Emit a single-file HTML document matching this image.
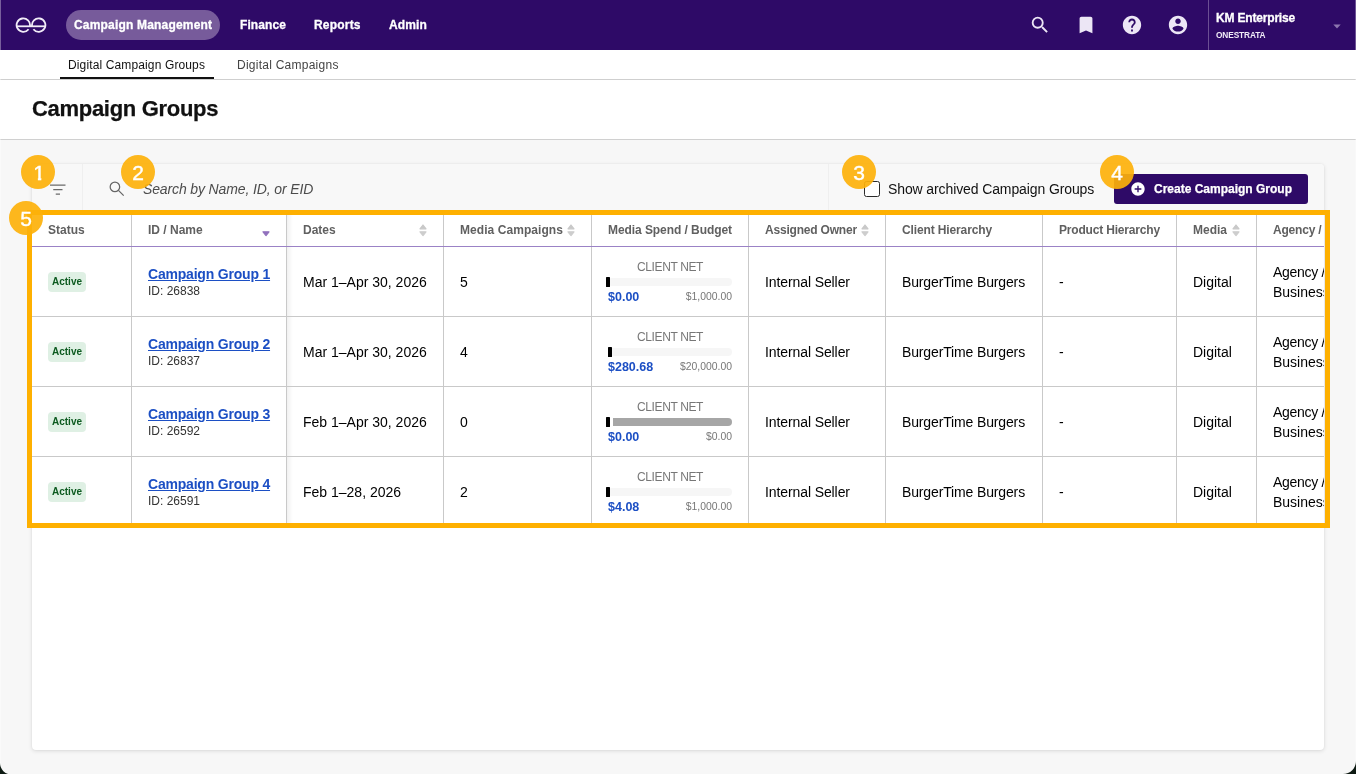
<!DOCTYPE html>
<html lang="en">
<head>
<meta charset="utf-8">
<title>Campaign Groups</title>
<style>
*{box-sizing:border-box;margin:0;padding:0}
html,body{width:1356px;height:774px;overflow:hidden;background:#f7f7f7;font-family:"Liberation Sans",sans-serif;color:#000}
.abs{position:absolute}
#root{will-change:transform;position:relative;width:1356px;height:774px;overflow:hidden;background:#f7f7f7}
/* top bar */
#top{left:0;top:0;width:1356px;height:50px;background:#2e0a67}
#edge{left:0;top:0;width:1px;height:774px;background:rgba(255,255,255,.35);z-index:50}
.nav{color:#fff;font-weight:bold;font-size:12px;line-height:14px;top:18px;white-space:nowrap;-webkit-text-stroke:.3px #fff}
#pill{left:66px;top:10px;width:154px;height:30px;border-radius:15px;background:#775b9b}
#vdiv{left:1208px;top:0;width:1px;height:50px;background:#6b4f93}
/* sub nav */
#sub{left:0;top:50px;width:1356px;height:30px;background:#fff;border-bottom:1px solid #cfcfcf}
.tab{font-size:12px;line-height:14px;top:58px;white-space:nowrap}
#tabline{left:60px;top:77px;width:153.600px;height:2px;background:#111}
/* header */
#hdr{left:0;top:80px;width:1356px;height:60px;background:#fff;border-bottom:1px solid #d0d0d0}
#title{left:32px;top:96px;font-size:22px;line-height:26px;font-weight:bold;letter-spacing:-.3px;color:#111;white-space:nowrap;-webkit-text-stroke:.25px #111}
/* card */
#card{left:32px;top:164px;width:1292px;height:586px;background:#fff;border-radius:4px;box-shadow:0 1px 4px rgba(0,0,0,.12),0 0 2px rgba(0,0,0,.06);overflow:hidden}
#tools{left:0;top:0;width:1292px;height:51px;background:#f8f8f8}
.tdiv{top:0;width:1px;height:51px;background:#efefef}
#ph{left:111px;top:17px;font-size:14px;line-height:16px;font-style:italic;color:#4c4c4c;white-space:nowrap;letter-spacing:-.13px}
#cb{left:832px;top:17px;width:16px;height:16px;border:1.400px solid #2a2a2a;border-radius:2.500px;background:#fff}
#cbl{left:856px;top:17px;font-size:14px;line-height:16px;color:#111;white-space:nowrap;letter-spacing:-.11px}
#btn{left:1082px;top:10px;width:194px;height:30px;border-radius:3px;background:#2e0a67}
#btnt{left:1122px;top:18px;font-size:12px;line-height:14px;font-weight:bold;color:#fff;white-space:nowrap;-webkit-text-stroke:.25px #fff}
/* table */
#tbl{left:0;top:51px;width:1292px;height:311px;overflow:hidden;background:#fff}
.vl{top:0;width:1px;height:320px;background:#c9c9c9}
.hl{left:0;width:1292px;height:1px;background:#c9c9c9}
#pl{left:0;top:31px;width:1292px;height:1px;background:#9b82c6}
.th{top:8px;font-size:12px;line-height:14px;font-weight:bold;color:#606060;white-space:nowrap}
.td{font-size:14px;line-height:16px;color:#000;white-space:nowrap}
.act{left:16px;width:38px;height:20px;border-radius:4px;background:#dff0e4;color:#0c5a1f;font-size:10px;font-weight:bold;line-height:20px;text-align:center}
.lnk{left:116px;font-size:14px;line-height:16px;font-weight:bold;color:#1c4fc4;text-decoration:underline;letter-spacing:-.2px;white-space:nowrap}
.idt{left:116px;font-size:12px;line-height:14px;color:#333;white-space:nowrap}
.cn{left:576px;width:124px;text-align:center;font-size:12px;line-height:13px;color:#777;letter-spacing:-.38px;white-space:nowrap}
.bar{left:576px;width:124px;height:7.500px;border-radius:4px;background:#f6f6f6}
.bar.full{background:#a6a6a6;left:581px;width:119px;border-radius:0 4px 4px 0}
.tick{left:574px;width:4.300px;height:9.600px;background:#000;border-radius:.600px;margin-top:-.500px}
.sp{left:576px;font-size:12.500px;line-height:14px;font-weight:bold;color:#1c4fc4;white-space:nowrap}
.bd{left:576px;width:124px;text-align:right;font-size:10.4px;line-height:12px;color:#777;white-space:nowrap}
/* annotations */
.badge{width:34px;height:34px;border-radius:17px;background:rgba(253,177,10,.92);color:#fff;font-size:21px;line-height:35.400px;text-align:center;z-index:20;-webkit-text-stroke:.4px #fff}
.one{display:inline-block;line-height:1;position:relative;left:1.200px;clip-path:polygon(0 0,100% 0,100% 75.500%,68% 75.500%,68% 100%,39% 100%,39% 75.500%,0 75.500%)}
#hl{left:27px;top:210px;width:1303px;height:318px;border:5px solid #feb000;z-index:15}
.corner{bottom:0;z-index:60}
</style>
</head>
<body>
<div id="root">
<div id="top" class="abs"></div>
<div id="pill" class="abs"></div>
<svg class="abs" style="left:15px;top:17.200px" width="32" height="18" viewBox="0 0 32 18" fill="none" stroke="#f1ecf8" stroke-width="1.8">
<path d="M1.6 9.3H30.4"/>
<path d="M13.6 12.2A6.7 6.7 0 1 1 14.9 9.3"/>
<path d="M18.4 12.2A6.7 6.7 0 1 0 17.1 9.3"/>
</svg>
<div class="abs nav" style="left:74px;letter-spacing:.19px">Campaign Management</div>
<div class="abs nav" style="left:240px;letter-spacing:.1px">Finance</div>
<div class="abs nav" style="left:314px;letter-spacing:.2px">Reports</div>
<div class="abs nav" style="left:389px;letter-spacing:.15px">Admin</div>
<!-- right icons -->
<svg class="abs" style="left:1029px;top:14px" width="22" height="22" viewBox="0 0 24 24" fill="#ece6f5"><path d="M15.5 14h-.79l-.28-.27A6.47 6.47 0 0 0 16 9.5 6.5 6.5 0 1 0 9.5 16c1.61 0 3.09-.59 4.23-1.57l.27.28v.79l5 4.99L20.490 19l-4.990-5zm-6 0C7.010 14 5 11.990 5 9.500S7.010 5 9.500 5 14 7.010 14 9.500 11.990 14 9.500 14z"/></svg>
<svg class="abs" style="left:1075px;top:14px" width="22" height="22" viewBox="0 0 24 24" fill="#ece6f5"><path d="M17 3H7c-1.100 0-2 .900-2 2v16l7-3 7 3V5c0-1.100-.900-2-2-2z"/></svg>
<svg class="abs" style="left:1121px;top:14px" width="22" height="22" viewBox="0 0 24 24" fill="#ece6f5"><path d="M12 2C6.480 2 2 6.480 2 12s4.480 10 10 10 10-4.480 10-10S17.520 2 12 2zm1 17h-2v-2h2v2zm2.070-7.750l-.900.920C13.450 12.900 13 13.500 13 15h-2v-.500c0-1.100.450-2.100 1.170-2.830l1.240-1.260c.370-.360.590-.860.590-1.410 0-1.100-.900-2-2-2s-2 .900-2 2H8c0-2.210 1.790-4 4-4s4 1.790 4 4c0 .880-.360 1.680-.930 2.250z"/></svg>
<svg class="abs" style="left:1167px;top:14px" width="22" height="22" viewBox="0 0 24 24" fill="#ece6f5"><path d="M12 2C6.480 2 2 6.480 2 12s4.480 10 10 10 10-4.480 10-10S17.520 2 12 2zm0 3c1.660 0 3 1.340 3 3s-1.340 3-3 3-3-1.340-3-3 1.340-3 3-3zm0 14.200c-2.500 0-4.710-1.280-6-3.220.030-1.990 4-3.080 6-3.080 1.990 0 5.970 1.090 6 3.080-1.290 1.940-3.500 3.220-6 3.220z"/></svg>
<div id="vdiv" class="abs"></div>
<div class="abs nav" style="left:1216px;top:11px;letter-spacing:-.18px">KM Enterprise</div>
<div class="abs" style="left:1216px;top:29.500px;font-size:8.300px;line-height:10px;letter-spacing:-.1px;font-weight:bold;color:#f0ebf7;white-space:nowrap">ONESTRATA</div>
<svg class="abs" style="left:1333px;top:24px" width="8" height="5" viewBox="0 0 8 5"><path d="M0.300 0.500H7.700L4 4.500z" fill="#8d76b0"/></svg>

<div id="sub" class="abs"></div>
<div class="abs tab" style="left:68px;color:#111;letter-spacing:.13px">Digital Campaign Groups</div>
<div class="abs tab" style="left:237px;color:#444;letter-spacing:.25px">Digital Campaigns</div>
<div id="tabline" class="abs"></div>
<div id="hdr" class="abs"></div>
<div id="title" class="abs">Campaign Groups</div>

<div id="card" class="abs">
 <div id="tools" class="abs"></div>
 <div class="abs tdiv" style="left:50px"></div>
 <div class="abs tdiv" style="left:796px"></div>
 <svg class="abs" style="left:16px;top:15px" width="20" height="20" viewBox="0 0 20 20" fill="none" stroke="#6a6a6a" stroke-width="1.1"><path d="M2 6.100H17.500M5.250 10.600H14.500M7.750 15.100H12"/></svg>
 <svg class="abs" style="left:75px;top:15px" width="20" height="20" viewBox="0 0 24 24" fill="none" stroke="#666" stroke-width="1.500"><circle cx="9.500" cy="9.500" r="5.700"/><path d="M13.700 13.700L20 20"/></svg>
 <div id="ph" class="abs">Search by Name, ID, or EID</div>
 <div id="cb" class="abs"></div>
 <div id="cbl" class="abs">Show archived Campaign Groups</div>
 <div id="btn" class="abs"></div>
 <svg class="abs" style="left:1097.500px;top:16.500px" width="16" height="16" viewBox="0 0 24 24" fill="#fff"><path d="M12 2C6.480 2 2 6.480 2 12s4.480 10 10 10 10-4.480 10-10S17.520 2 12 2zm5 11h-4v4h-2v-4H7v-2h4V7h2v4h4v2z"/></svg>
 <div id="btnt" class="abs">Create Campaign Group</div>

 <div id="tbl" class="abs">
  <div class="abs vl" style="left:99px"></div>
  <div class="abs vl" style="left:254px"></div>
  <div class="abs vl" style="left:411px"></div>
  <div class="abs vl" style="left:559px"></div>
  <div class="abs vl" style="left:716px"></div>
  <div class="abs vl" style="left:853px"></div>
  <div class="abs vl" style="left:1010px"></div>
  <div class="abs vl" style="left:1144px"></div>
  <div class="abs vl" style="left:1224px"></div>
  <div class="abs" style="left:255px;top:0;width:6px;height:311px;background:linear-gradient(90deg,rgba(0,0,0,.055),rgba(0,0,0,0))"></div>
  <div id="pl" class="abs"></div>
  <div class="abs hl" style="top:101px"></div>
  <div class="abs hl" style="top:171px"></div>
  <div class="abs hl" style="top:241px"></div>
  <div class="abs hl" style="top:311px"></div>
  <!-- header -->
  <div class="abs th" style="left:16px">Status</div>
  <div class="abs th" style="left:116px">ID / Name</div>
  <div class="abs th" style="left:271px">Dates</div>
  <div class="abs th" style="left:428px;letter-spacing:.06px">Media Campaigns</div>
  <div class="abs th" style="left:576px;letter-spacing:-.07px">Media Spend / Budget</div>
  <div class="abs th" style="left:733px;letter-spacing:-.2px">Assigned Owner</div>
  <div class="abs th" style="left:870px;letter-spacing:-.13px">Client Hierarchy</div>
  <div class="abs th" style="left:1027px;letter-spacing:-.18px">Product Hierarchy</div>
  <div class="abs th" style="left:1161px">Media</div>
  <div class="abs th" style="left:1241px;letter-spacing:-.2px">Agency /</div>
  <!-- sort icons -->
  <svg class="abs" style="left:230px;top:9px" width="8" height="13" viewBox="0 0 8 13"><path d="M1 7.800H7L4 11.600z" fill="#9171bd" stroke="#9171bd" stroke-width="1.2" stroke-linejoin="round"/></svg>
  <svg class="abs sort" style="left:387px;top:9px" width="8" height="13" viewBox="0 0 8 13"><path d="M1 4.800H7L4 1z" fill="#c8c8c8" stroke="#c8c8c8" stroke-width="1.2" stroke-linejoin="round"/><path d="M1 7.800H7L4 11.600z" fill="#cdcdcd" stroke="#cdcdcd" stroke-width="1.2" stroke-linejoin="round"/></svg>
  <svg class="abs sort" style="left:535px;top:9px" width="8" height="13" viewBox="0 0 8 13"><path d="M1 4.800H7L4 1z" fill="#c8c8c8" stroke="#c8c8c8" stroke-width="1.2" stroke-linejoin="round"/><path d="M1 7.800H7L4 11.600z" fill="#cdcdcd" stroke="#cdcdcd" stroke-width="1.2" stroke-linejoin="round"/></svg>
  <svg class="abs sort" style="left:829px;top:9px" width="8" height="13" viewBox="0 0 8 13"><path d="M1 4.800H7L4 1z" fill="#c8c8c8" stroke="#c8c8c8" stroke-width="1.2" stroke-linejoin="round"/><path d="M1 7.800H7L4 11.600z" fill="#cdcdcd" stroke="#cdcdcd" stroke-width="1.2" stroke-linejoin="round"/></svg>
  <svg class="abs sort" style="left:1200px;top:9px" width="8" height="13" viewBox="0 0 8 13"><path d="M1 4.800H7L4 1z" fill="#c8c8c8" stroke="#c8c8c8" stroke-width="1.2" stroke-linejoin="round"/><path d="M1 7.800H7L4 11.600z" fill="#cdcdcd" stroke="#cdcdcd" stroke-width="1.2" stroke-linejoin="round"/></svg>
  <!-- ROWS -->
  <!--R1--><div class="abs" style="left:0;top:32px">
   <div class="abs act" style="top:25px">Active</div>
   <div class="abs lnk" style="top:19px">Campaign Group 1</div><div class="abs idt" style="top:37px">ID: 26838</div>
   <div class="abs td" style="left:271px;top:27px">Mar 1–Apr 30, 2026</div>
   <div class="abs td" style="left:428px;top:27px">5</div>
   <div class="abs cn" style="top:14px">CLIENT NET</div><div class="abs bar" style="top:31px"></div><div class="abs tick" style="top:30.600px"></div>
   <div class="abs sp" style="top:43px">$0.00</div><div class="abs bd" style="top:44px">$1,000.00</div>
   <div class="abs td" style="left:733px;top:27px;letter-spacing:-.1px">Internal Seller</div>
   <div class="abs td" style="left:870px;top:27px;letter-spacing:-.14px">BurgerTime Burgers</div>
   <div class="abs td" style="left:1027px;top:27px">-</div>
   <div class="abs td" style="left:1161px;top:27px">Digital</div>
   <div class="abs td" style="left:1241px;top:17px;letter-spacing:-.3px">Agency /</div><div class="abs td" style="left:1241px;top:37px">Business</div>
  </div>
  <!--R2--><div class="abs" style="left:0;top:102px">
   <div class="abs act" style="top:25px">Active</div>
   <div class="abs lnk" style="top:19px">Campaign Group 2</div><div class="abs idt" style="top:37px">ID: 26837</div>
   <div class="abs td" style="left:271px;top:27px">Mar 1–Apr 30, 2026</div>
   <div class="abs td" style="left:428px;top:27px">4</div>
   <div class="abs cn" style="top:14px">CLIENT NET</div><div class="abs bar" style="top:31px"></div><div class="abs tick" style="top:30.600px;left:576px"></div>
   <div class="abs sp" style="top:43px">$280.68</div><div class="abs bd" style="top:44px">$20,000.00</div>
   <div class="abs td" style="left:733px;top:27px;letter-spacing:-.1px">Internal Seller</div>
   <div class="abs td" style="left:870px;top:27px;letter-spacing:-.14px">BurgerTime Burgers</div>
   <div class="abs td" style="left:1027px;top:27px">-</div>
   <div class="abs td" style="left:1161px;top:27px">Digital</div>
   <div class="abs td" style="left:1241px;top:17px;letter-spacing:-.3px">Agency /</div><div class="abs td" style="left:1241px;top:37px">Business</div>
  </div>
  <!--R3--><div class="abs" style="left:0;top:172px">
   <div class="abs act" style="top:25px">Active</div>
   <div class="abs lnk" style="top:19px">Campaign Group 3</div><div class="abs idt" style="top:37px">ID: 26592</div>
   <div class="abs td" style="left:271px;top:27px">Feb 1–Apr 30, 2026</div>
   <div class="abs td" style="left:428px;top:27px">0</div>
   <div class="abs cn" style="top:14px">CLIENT NET</div><div class="abs bar full" style="top:31px"></div><div class="abs tick" style="top:30.600px"></div>
   <div class="abs sp" style="top:43px">$0.00</div><div class="abs bd" style="top:44px">$0.00</div>
   <div class="abs td" style="left:733px;top:27px;letter-spacing:-.1px">Internal Seller</div>
   <div class="abs td" style="left:870px;top:27px;letter-spacing:-.14px">BurgerTime Burgers</div>
   <div class="abs td" style="left:1027px;top:27px">-</div>
   <div class="abs td" style="left:1161px;top:27px">Digital</div>
   <div class="abs td" style="left:1241px;top:17px;letter-spacing:-.3px">Agency /</div><div class="abs td" style="left:1241px;top:37px">Business</div>
  </div>
  <!--R4--><div class="abs" style="left:0;top:242px">
   <div class="abs act" style="top:25px">Active</div>
   <div class="abs lnk" style="top:19px">Campaign Group 4</div><div class="abs idt" style="top:37px">ID: 26591</div>
   <div class="abs td" style="left:271px;top:27px">Feb 1–28, 2026</div>
   <div class="abs td" style="left:428px;top:27px">2</div>
   <div class="abs cn" style="top:14px">CLIENT NET</div><div class="abs bar" style="top:31px"></div><div class="abs tick" style="top:30.600px"></div>
   <div class="abs sp" style="top:43px">$4.08</div><div class="abs bd" style="top:44px">$1,000.00</div>
   <div class="abs td" style="left:733px;top:27px;letter-spacing:-.1px">Internal Seller</div>
   <div class="abs td" style="left:870px;top:27px;letter-spacing:-.14px">BurgerTime Burgers</div>
   <div class="abs td" style="left:1027px;top:27px">-</div>
   <div class="abs td" style="left:1161px;top:27px">Digital</div>
   <div class="abs td" style="left:1241px;top:17px;letter-spacing:-.3px">Agency /</div><div class="abs td" style="left:1241px;top:37px">Business</div>
  </div>
 </div>
</div>

<!-- annotation overlays -->
<div id="hl" class="abs"></div>
<div class="abs badge" style="left:21px;top:155px"><span class="one">1</span></div>
<div class="abs badge" style="left:121px;top:155px">2</div>
<div class="abs badge" style="left:842px;top:155px">3</div>
<div class="abs badge" style="left:1100px;top:155px">4</div>
<div class="abs badge" style="left:9px;top:201px">5</div>
<div id="edge" class="abs"></div>
<div class="abs" style="right:0;top:0;width:1px;height:774px;background:rgba(255,255,255,.3);z-index:50"></div>
<svg class="abs corner" style="left:0;bottom:0" width="11.500" height="11.500" viewBox="0 0 12 12"><path d="M0 0V12H12A12 12 0 0 1 0 0z" fill="#0d1a12"/></svg>
<svg class="abs corner" style="right:0;bottom:0" width="13" height="13" viewBox="0 0 12 12"><path d="M12 0V12H0A12 12 0 0 0 12 0z" fill="#0d1a12"/></svg>
</div>
</body>
</html>
